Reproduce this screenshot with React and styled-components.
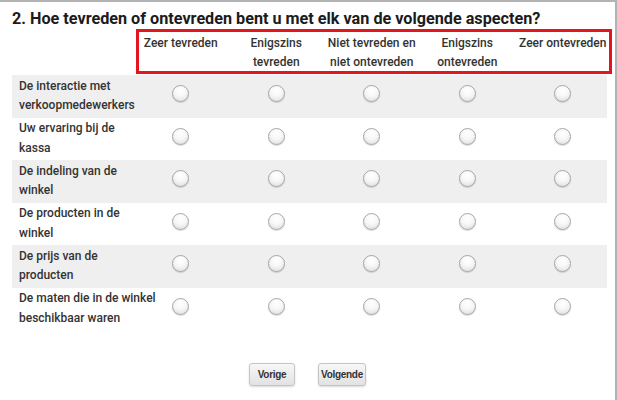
import React from 'react';
import styled, { createGlobalStyle } from 'styled-components';

const GlobalStyle = createGlobalStyle`
    html, body {
        margin: 0;
        padding: 0;
        background: #fff;
    }
    body {
        font-family: Roboto, "Liberation Sans", sans-serif;
        color: #333;
    }
`;

const columns = [
    ['Zeer tevreden'],
    ['Enigszins', 'tevreden'],
    ['Niet tevreden en', 'niet ontevreden'],
    ['Enigszins', 'ontevreden'],
    ['Zeer ontevreden'],
];

const rows = [
    ['De interactie met', 'verkoopmedewerkers'],
    ['Uw ervaring bij de', 'kassa'],
    ['De indeling van de', 'winkel'],
    ['De producten in de', 'winkel'],
    ['De prijs van de', 'producten'],
    ['De maten die in de winkel', 'beschikbaar waren'],
];

export default function App() {
    return (
        <Frame>
            <GlobalStyle />
            <Title>2. Hoe tevreden of ontevreden bent u met elk van de volgende aspecten?</Title>
            <Matrix>
                <HeaderRow>
                    <span />
                    {columns.map((lines, i) => (
                        <HeaderCell key={i}>
                            {lines.map(l => (
                                <div key={l}>{l}</div>
                            ))}
                        </HeaderCell>
                    ))}
                    <Highlight />
                </HeaderRow>
                {rows.map((lines, r) => (
                    <Row key={r} shaded={r % 2 === 0}>
                        <RowLabel>
                            {lines.map(l => (
                                <div key={l}>{l}</div>
                            ))}
                        </RowLabel>
                        {columns.map((_, c) => (
                            <RadioCell key={c}>
                                <Radio />
                            </RadioCell>
                        ))}
                    </Row>
                ))}
            </Matrix>
            <Nav>
                <NavButton w={46}>Vorige</NavButton>
                <NavButton w={48}>Volgende</NavButton>
            </Nav>
        </Frame>
    );
}

const Frame = styled.div`
    width: 615px;
    height: 398px;
    border-top: 2px solid #b3b3b3;
    border-right: 2px solid #b3b3b3;
    box-sizing: content-box;
    display: flex;
    flex-direction: column;
`;

const Title = styled.h2`
    margin: 7px 0 0 12px;
    font-size: 16.2px;
    line-height: 20px;
    font-weight: 700;
    color: #1b1b1b;
`;

const Matrix = styled.div`
    margin: 2px 0 0 12px;
    width: 598px;
`;

const grid = `
    display: grid;
    grid-template-columns: 121px repeat(5, 95.5px);
`;

const HeaderRow = styled.div`
    ${grid}
    position: relative;
    height: 44px;
    padding-top: 3px;
    box-sizing: border-box;
`;

const HeaderCell = styled.div`
    text-align: center;
    font-size: 12px;
    line-height: 19px;
    font-weight: 500;
    color: #333;
    white-space: nowrap;
`;

const Highlight = styled.div`
    position: absolute;
    left: 124px;
    top: -2px;
    width: 476px;
    height: 45px;
    border: 3px solid #e3161d;
    box-sizing: border-box;
    pointer-events: none;
`;

const Row = styled.div`
    ${grid}
    width: 595px;
    height: 42.5px;
    background: ${p => (p.shaded ? '#efefef' : '#fff')};
    align-items: center;
`;

const RowLabel = styled.div`
    padding-left: 7px;
    font-size: 12px;
    line-height: 19.5px;
    font-weight: 500;
    color: #333;
    white-space: nowrap;
`;

const RadioCell = styled.div`
    display: flex;
    justify-content: center;
    padding-bottom: 5px;
`;

const Radio = styled.span`
    width: 17px;
    height: 17px;
    border-radius: 50%;
    box-sizing: border-box;
    border: 1px solid #a6a6a6;
    background: radial-gradient(circle at 50% 30%, #ffffff 0%, #f7f7f7 45%, #dadada 100%);
    box-shadow: 0 1px 1px rgba(0, 0, 0, 0.15);
`;

const Nav = styled.div`
    display: flex;
    justify-content: center;
    gap: 23px;
    margin-top: 33px;
`;

const NavButton = styled.button`
    width: ${p => p.w}px;
    height: 23px;
    padding: 0;
    font-family: "Liberation Sans", Arial, sans-serif;
    font-size: 10px;
    font-weight: 700;
    letter-spacing: -0.3px;
    color: #333;
    border: 1px solid #c4c4c4;
    border-radius: 3px;
    background: linear-gradient(#f7f7f7, #e2e2e2);
    box-shadow: 0 1px 2px rgba(0, 0, 0, 0.15);
`;
